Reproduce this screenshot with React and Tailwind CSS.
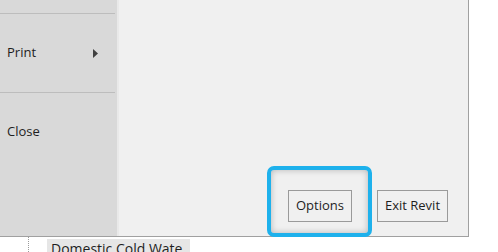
export default function App() {
  return (
    <div className="relative h-[252px] w-[498px] overflow-hidden bg-white text-[13px] text-[#1e1e1e] font-['Open_Sans','Noto_Sans',sans-serif]">
      <div className="flex h-[237px] w-[469px] border-r border-b border-[#a0a0a0] bg-[#f0f0f0]">
        <div className="flex w-[119px] shrink-0 flex-col border-r-2 border-[#e9e9e9] bg-[#d9d9d9]">
          <div className="h-[13px]" />
          <div className="mr-[2px] h-px bg-[#bdbdbd]" />
          <div className="flex h-[78px] items-center justify-between pl-[7px] pr-[19px]">
            <span>Print</span>
            <svg width="5" height="9" viewBox="0 0 5 9">
              <path d="M0 0 L5 4.5 L0 9 Z" fill="#404040" />
            </svg>
          </div>
          <div className="mr-[2px] h-px bg-[#bdbdbd]" />
          <div className="flex h-[78px] items-center pl-[7px]">
            <span>Close</span>
          </div>
        </div>
        <div className="flex flex-1 items-end justify-end gap-[25px] pr-[20px] pb-[14px]">
          <button className="flex h-[32px] w-[64px] items-center justify-center border border-[#9a9a9a] bg-[#f0f0f0]">
            Options
          </button>
          <button className="flex h-[32px] w-[71px] items-center justify-center border border-[#9a9a9a] bg-[#f0f0f0]">
            Exit Revit
          </button>
        </div>
      </div>
      <div className="absolute left-[267px] top-[166px] h-[71px] w-[105px] rounded-[7px] border-4 border-[#1eb1ec] shadow-[inset_0_0_6px_rgba(0,0,0,0.25)]" />
      <div className="flex h-[15px]">
        <div className="ml-[28px] h-full border-l border-dotted border-[#9a9a9a]" />
        <div className="ml-[18px] mt-[2px] h-[20px] w-[143px] bg-[#e6e6e6] pl-[4px] text-[14px] leading-[20px]">
          Domestic Cold Wate
        </div>
      </div>
    </div>
  )
}
